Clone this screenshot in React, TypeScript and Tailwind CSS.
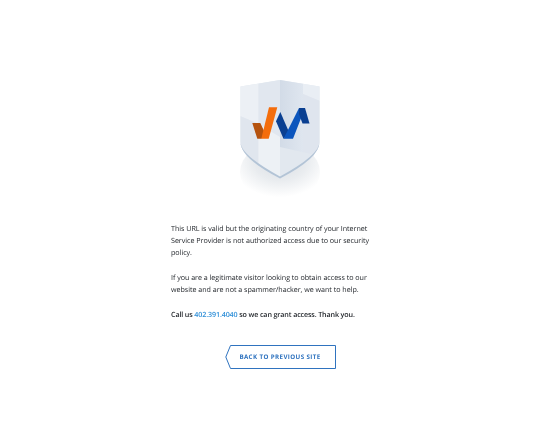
export default function App() {
  return (
    <div className="w-[560px] h-[448px] bg-white flex flex-col items-center pt-[80px] font-['Open_Sans',sans-serif] [text-rendering:geometricPrecision] blur-[0.3px]">
      <svg width="80" height="122" viewBox="0 0 80 122" className="block">
        <defs>
          <radialGradient id="sh" cx="50%" cy="30%" r="62%">
            <stop offset="0%" stopColor="#d8dce2" />
            <stop offset="55%" stopColor="#e9ecef" />
            <stop offset="100%" stopColor="#ffffff" />
          </radialGradient>
          <linearGradient id="p3" x1="0" y1="0" x2="1" y2="0">
            <stop offset="0%" stopColor="#d2dbe7" />
            <stop offset="100%" stopColor="#dfe6ef" />
          </linearGradient>
          <clipPath id="shield">
            <path d="M40 0 L79.5 6.5 V62 Q79.5 78 40 98.5 Q.5 78 .5 62 V6.5 Z" />
          </clipPath>
        </defs>
        <ellipse cx="40" cy="92" rx="40" ry="30" fill="url(#sh)" />
        <g clipPath="url(#shield)">
          <rect x="0" y="0" width="80" height="100" fill="#e4e9f0" />
          <path d="M0 0 H18.5 V44 L0 36 Z" fill="#ecf0f5" />
          <path d="M18.5 0 H40 V60 L18.5 44 Z" fill="#e1e7ef" />
          <path d="M40 0 H63 V80 H40 Z" fill="url(#p3)" />
          <path d="M63 0 H80 V21 L63 14 Z" fill="#e9eef4" />
          <path d="M63 14 L80 21 V80 H63 Z" fill="#dfe5ee" />
          <path d="M0 36 L18.5 44 V100 H0 Z" fill="#e0e6ee" />
          <path d="M18.5 44 L40 57 V100 H18.5 Z" fill="#edf1f5" />
          <path d="M40 67 L80 76 V100 H40 Z" fill="#e2e8ef" />
        </g>
        <path d="M.5 62 Q.5 78 40 98.5 Q79.5 78 79.5 62 Q79.5 75 40 96.5 Q.5 75 .5 62 Z" fill="#b3c4d6" />
        <path d="M12.3 43 H20.3 L26 55 L21.3 58.7 H17.3 Z" fill="#b5530f" />
        <path d="M29 27.3 H37.3 L28.7 58.7 H21.3 Z" fill="#f46d0c" />
        <path d="M36 41.3 L40.3 32 L49 52 L43.5 58.7 Z" fill="#0a3f91" />
        <path d="M43.5 58.7 H53 L65 28 H59 L51 44 Z" fill="#0b55bd" />
        <path d="M59 28 H65 L69.5 43.5 H62.5 L59 34 Z" fill="#0a3f91" />
      </svg>
      <div className="w-[218px] mt-[20.5px] text-[7.15px] leading-[12.3px] font-medium tracking-[-0.03px] text-[#23272c]">
        <p>This URL is valid but the originating country of your Internet Service Provider is not authorized access due to our security policy.</p>
        <p className="mt-[12.3px]">If you are a legitimate visitor looking to obtain access to our website and are not a spammer/hacker, we want to help.</p>
        <p className="mt-[12.3px] font-semibold tracking-[-0.13px]">Call us <span className="text-[#2f8fd8]">402.391.4040</span> so we can grant access. Thank you.</p>
      </div>
      <div className="relative mt-[24.5px] w-[111px] h-[24px] flex items-center justify-center pb-[1px]">
        <svg width="111" height="24" viewBox="0 0 111 24" className="absolute inset-0">
          <path d="M5.5 .5 H110.5 V23.5 H5.5 L.8 12 Z" fill="none" stroke="#2f73bf" strokeWidth="1" />
        </svg>
        <span className="relative text-[6.2px] font-bold tracking-[.4px] text-[#2f73bf]">BACK TO PREVIOUS SITE</span>
      </div>
    </div>
  );
}
